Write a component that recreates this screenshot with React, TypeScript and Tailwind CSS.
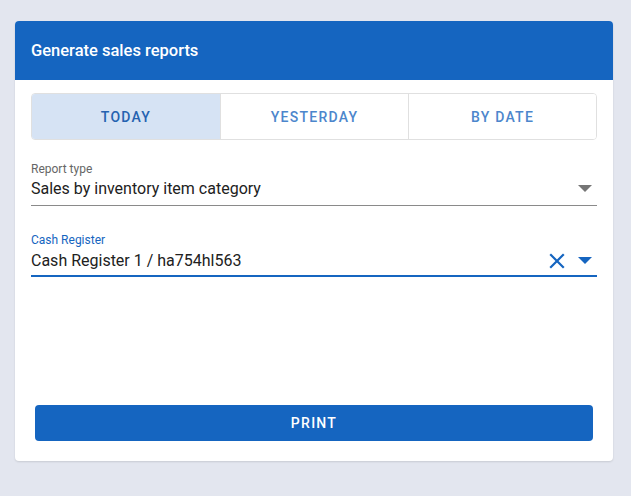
import { useState } from 'react';

const tabs = ['TODAY', 'YESTERDAY', 'BY DATE'];

const Caret = ({ color }: { color: string }) => (
  <svg width="14" height="8" viewBox="0 0 14 8">
    <path d="M0 0 L14 0 L7 7 Z" fill={color} />
  </svg>
);

export default function App() {
  const [active, setActive] = useState(0);

  return (
    <div className="min-h-[496px] bg-[#e3e6ef] pt-[21px] pl-[15px]" style={{ fontFamily: 'Roboto, "Noto Sans", sans-serif' }}>
      <div className="w-[598px] h-[440px] bg-white rounded-[4px] shadow-[0_1px_2px_rgba(0,0,0,0.12)] flex flex-col overflow-hidden">
        <div className="h-[59px] bg-[#1565c0] flex items-center px-4 pt-[2px]">
          <h1 className="text-[16.5px] font-medium text-white">Generate sales reports</h1>
        </div>

        <div className="flex-1 flex flex-col px-4 pt-[13px]">
          <div className="grid grid-cols-3 h-[47px] border border-[#e0e0e0] rounded-[4px] overflow-hidden">
            {tabs.map((t, i) => (
              <button
                key={t}
                onClick={() => setActive(i)}
                className={`text-[14px] font-medium tracking-[0.09em] pt-[2px] ${i > 0 ? 'border-l border-[#e0e0e0]' : ''} ${
                  active === i ? 'bg-[#d6e3f4] text-[#2462b0]' : 'bg-white text-[#4c86cc]'
                }`}
              >
                {t}
              </button>
            ))}
          </div>

          <div className="mt-[21px] border-b border-[#8a8a8a] pb-[4px]">
            <div className="text-[12px] leading-[16px] text-[#666]">Report type</div>
            <div className="flex items-center justify-between">
              <span className="text-[16px] leading-[24px] text-[#212121]">Sales by inventory item category</span>
              <span className="mr-[5px]">
                <Caret color="#757575" />
              </span>
            </div>
          </div>

          <div className="mt-[26px] border-b-2 border-[#1565c0] pb-[1px]">
            <div className="text-[12px] leading-[16px] text-[#1565c0]">Cash Register</div>
            <div className="flex items-center justify-between">
              <span className="text-[16px] leading-[26px] text-[#212121]">Cash Register 1 / ha754hl563</span>
              <span className="flex items-center gap-[13px] mr-[5px]">
                <svg width="16" height="16" viewBox="0 0 16 16">
                  <path d="M2 2 L14 14 M14 2 L2 14" stroke="#1565c0" strokeWidth="2.2" strokeLinecap="square" />
                </svg>
                <Caret color="#1565c0" />
              </span>
            </div>
          </div>

          <button className="mt-auto mb-[20px] mx-1 h-[36px] rounded-[4px] bg-[#1565c0] text-white text-[14px] font-medium tracking-[0.09em]">
            PRINT
          </button>
        </div>
      </div>
    </div>
  );
}
